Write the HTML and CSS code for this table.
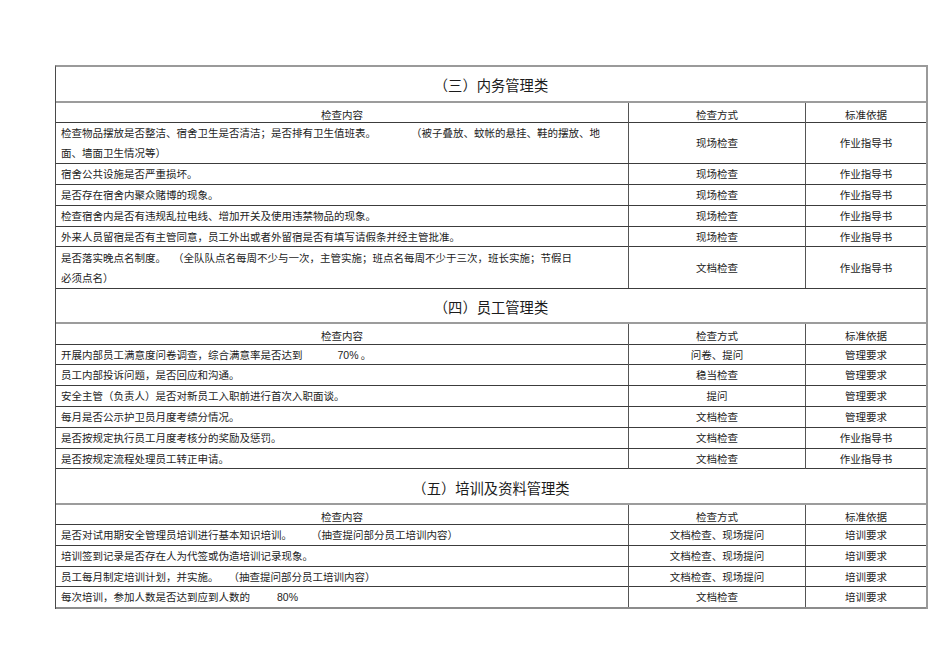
FILE: index.html
```html
<!DOCTYPE html>
<html lang="zh-CN">
<head>
<meta charset="utf-8">
<title>检查表</title>
<link rel="stylesheet" href="styles.css">
</head>
<body>
<div class="sheet">
  <div class="title">（三）内务管理类</div>
  <div class="row hd"><div class="cell c2"><span class="t">检查内容</span></div><div class="cell c2"><span class="t">检查方式</span></div><div class="cell c3"><span class="t">标准依据</span></div></div>
  <div class="row dbl"><div class="cell c1"><span class="t">检查物品摆放是否整洁、宿舍卫生是否清洁；是否排有卫生值班表。<span class="g35"></span>（被子叠放、蚊帐的悬挂、鞋的摆放、地<br>面、墙面卫生情况等）</span></div><div class="cell c2"><span class="t">现场检查</span></div><div class="cell c3"><span class="t">作业指导书</span></div></div>
  <div class="row"><div class="cell c1"><span class="t">宿舍公共设施是否严重损坏。</span></div><div class="cell c2"><span class="t">现场检查</span></div><div class="cell c3"><span class="t">作业指导书</span></div></div>
  <div class="row"><div class="cell c1"><span class="t">是否存在宿舍内聚众赌博的现象。</span></div><div class="cell c2"><span class="t">现场检查</span></div><div class="cell c3"><span class="t">作业指导书</span></div></div>
  <div class="row"><div class="cell c1"><span class="t">检查宿舍内是否有违规乱拉电线、增加开关及使用违禁物品的现象。</span></div><div class="cell c2"><span class="t">现场检查</span></div><div class="cell c3"><span class="t">作业指导书</span></div></div>
  <div class="row"><div class="cell c1"><span class="t">外来人员留宿是否有主管同意，员工外出或者外留宿是否有填写请假条并经主管批准。</span></div><div class="cell c2"><span class="t">现场检查</span></div><div class="cell c3"><span class="t">作业指导书</span></div></div>
  <div class="row dbl"><div class="cell c1"><span class="t">是否落实晚点名制度。<span class="g7"></span>（全队队点名每周不少与一次，主管实施；班点名每周不少于三次，班长实施；节假日<br>必须点名）</span></div><div class="cell c2"><span class="t">文档检查</span></div><div class="cell c3"><span class="t">作业指导书</span></div></div>

  <div class="title">（四）员工管理类</div>
  <div class="row hd"><div class="cell c2"><span class="t">检查内容</span></div><div class="cell c2"><span class="t">检查方式</span></div><div class="cell c3"><span class="t">标准依据</span></div></div>
  <div class="row"><div class="cell c1"><span class="t">开展内部员工满意度问卷调查，综合满意率是否达到<span class="g35"></span><span class="num">70%</span> 。</span></div><div class="cell c2"><span class="t">问卷、提问</span></div><div class="cell c3"><span class="t">管理要求</span></div></div>
  <div class="row"><div class="cell c1"><span class="t">员工内部投诉问题，是否回应和沟通。</span></div><div class="cell c2"><span class="t">稳当检查</span></div><div class="cell c3"><span class="t">管理要求</span></div></div>
  <div class="row"><div class="cell c1"><span class="t">安全主管（负责人）是否对新员工入职前进行首次入职面谈。</span></div><div class="cell c2"><span class="t">提问</span></div><div class="cell c3"><span class="t">管理要求</span></div></div>
  <div class="row"><div class="cell c1"><span class="t">每月是否公示护卫员月度考绩分情况。</span></div><div class="cell c2"><span class="t">文档检查</span></div><div class="cell c3"><span class="t">管理要求</span></div></div>
  <div class="row"><div class="cell c1"><span class="t">是否按规定执行员工月度考核分的奖励及惩罚。</span></div><div class="cell c2"><span class="t">文档检查</span></div><div class="cell c3"><span class="t">作业指导书</span></div></div>
  <div class="row"><div class="cell c1"><span class="t">是否按规定流程处理员工转正申请。</span></div><div class="cell c2"><span class="t">文档检查</span></div><div class="cell c3"><span class="t">作业指导书</span></div></div>

  <div class="title">（五）培训及资料管理类</div>
  <div class="row hd"><div class="cell c2"><span class="t">检查内容</span></div><div class="cell c2"><span class="t">检查方式</span></div><div class="cell c3"><span class="t">标准依据</span></div></div>
  <div class="row"><div class="cell c1"><span class="t">是否对试用期安全管理员培训进行基本知识培训。<span class="g19"></span>（抽查提问部分员工培训内容）</span></div><div class="cell c2"><span class="t">文档检查、现场提问</span></div><div class="cell c3"><span class="t">培训要求</span></div></div>
  <div class="row"><div class="cell c1"><span class="t">培训签到记录是否存在人为代签或伪造培训记录现象。</span></div><div class="cell c2"><span class="t">文档检查、现场提问</span></div><div class="cell c3"><span class="t">培训要求</span></div></div>
  <div class="row"><div class="cell c1"><span class="t">员工每月制定培训计划，并实施。<span class="g10"></span>（抽查提问部分员工培训内容）</span></div><div class="cell c2"><span class="t">文档检查、现场提问</span></div><div class="cell c3"><span class="t">培训要求</span></div></div>
  <div class="row last"><div class="cell c1"><span class="t">每次培训，参加人数是否达到应到人数的<span class="g27"></span><span class="num">80%</span></span></div><div class="cell c2"><span class="t">文档检查</span></div><div class="cell c3"><span class="t">培训要求</span></div></div>
</div>
</body>
</html>
```

FILE: styles.css
```css
* {
  box-sizing: border-box;
}

body {
  margin: 0;
  background: #ffffff;
  color: #1c1c1c;
  font-family: "Noto Sans CJK SC", "Noto Sans", sans-serif;
}

.sheet {
  margin: 65px 0 0 55px;
  width: 873px;
  border-top: 2px solid #9a9a9a;
  border-left: 1px solid #4a4a4a;
  border-right: 2px solid #9a9a9a;
}

.title {
  height: 35.6px;
  border-bottom: 2px solid #9c9c9c;
  display: flex;
  align-items: center;
  justify-content: center;
  padding-top: 3px;
  font-size: 14.3px;
  line-height: 20px;
}

.row {
  display: grid;
  grid-template-columns: 573px 177px 1fr;
  height: 20.8px;
  border-bottom: 1px solid #3c3c3c;
}

.row.hd {
  height: 20.2px;
}

.row.dbl {
  height: 41.4px;
}

.row.last {
  height: 21.5px;
  border-bottom: 2px solid #8c8c8c;
}

.cell {
  display: flex;
  align-items: center;
  padding: 0 5px;
  border-right: 1px solid #555555;
  font-size: 10.5px;
  line-height: 20px;
  white-space: nowrap;
}

.cell:last-child {
  border-right: none;
}

.c2,
.c3 {
  justify-content: center;
}

.hd .cell .t {
  padding-top: 2px;
}

.t {
  display: block;
}

.num {
  font-family: "Liberation Sans", Arial, sans-serif;
}

.g35 {
  display: inline-block;
  width: 35px;
}

.g27 {
  display: inline-block;
  width: 27px;
}

.g19 {
  display: inline-block;
  width: 19px;
}

.g10 {
  display: inline-block;
  width: 10px;
}

.g7 {
  display: inline-block;
  width: 7px;
}
```
